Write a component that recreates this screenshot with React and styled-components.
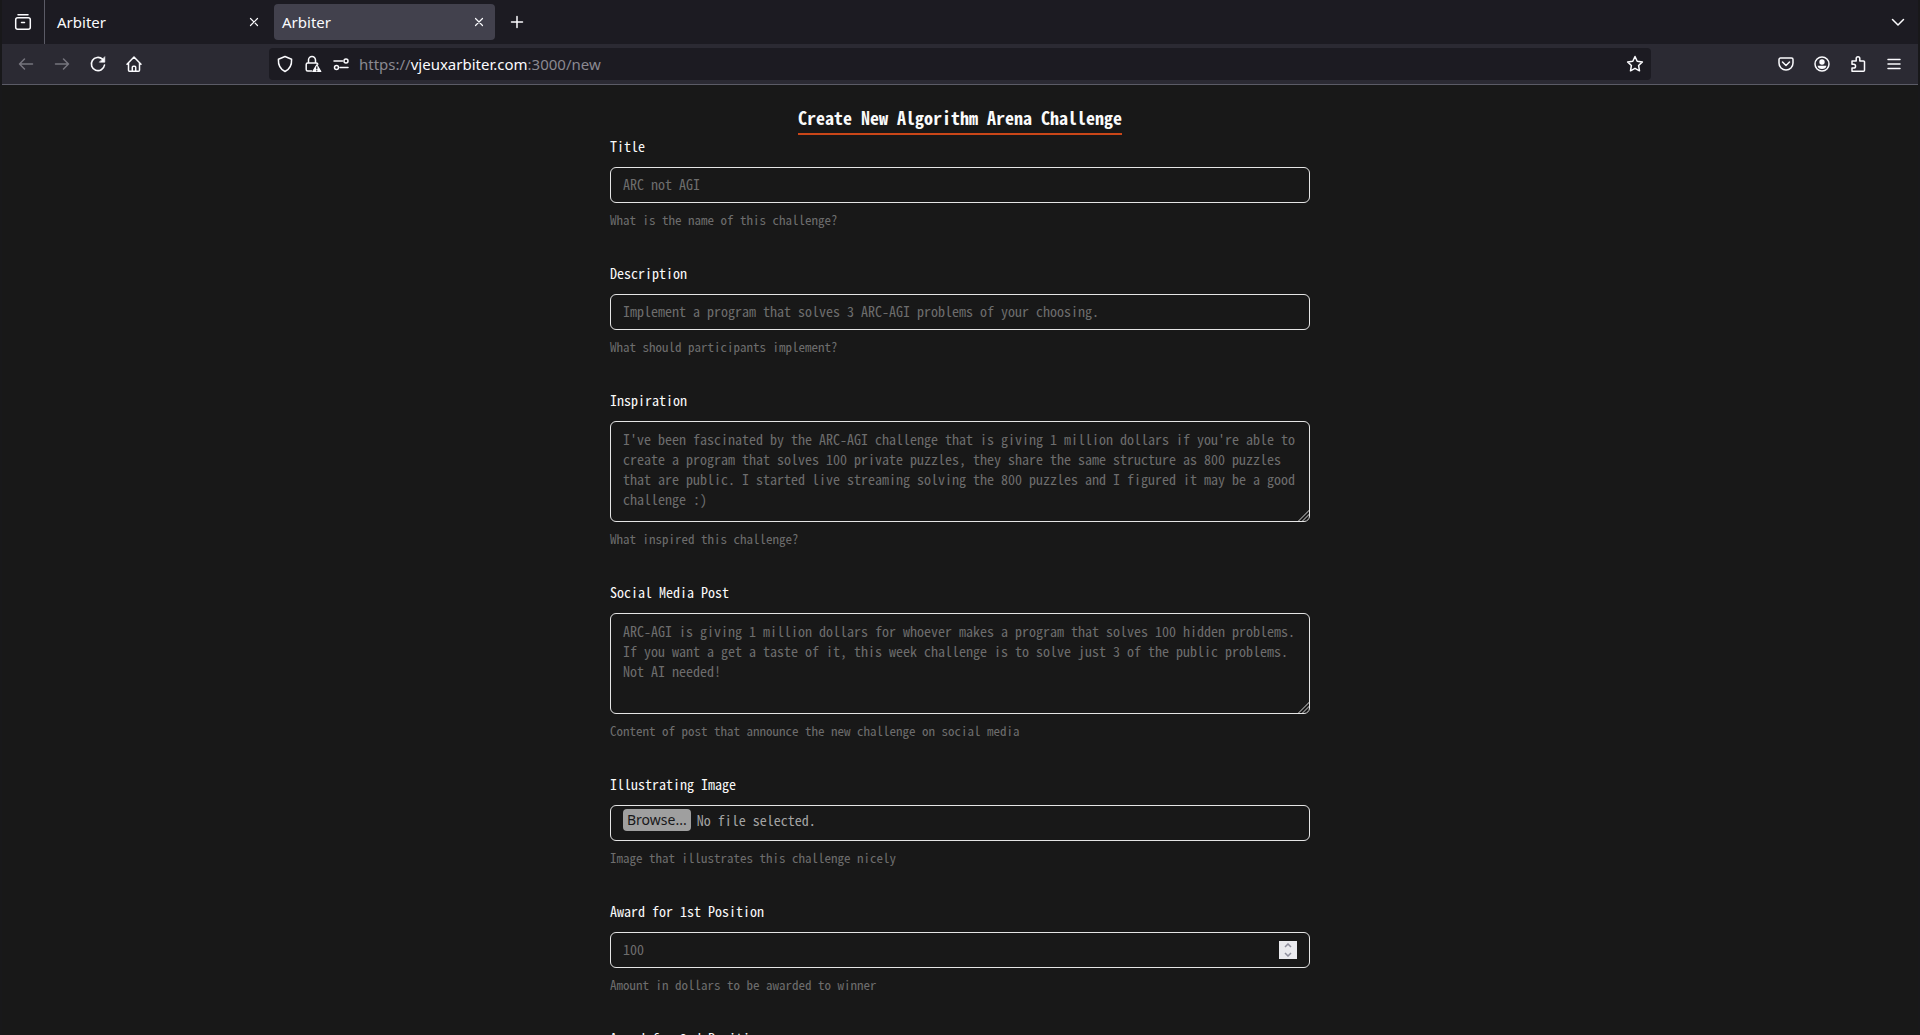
import React, { useRef, useState } from "react";
import styled, { createGlobalStyle } from "styled-components";

const mono = `"Noto Sans Mono CJK SC", "Noto Sans Mono CJK JP", "Liberation Mono", monospace`;
const sans = `"Noto Sans", "Open Sans", sans-serif`;

const GlobalStyle = createGlobalStyle`
  *, *::before, *::after { box-sizing: border-box; }
  html, body, #root { height: 100%; }
  body {
    margin: 0;
    background: #181818;
    color: #fafafa;
    font-family: ${mono};
    overflow: hidden;
  }
  button, input, textarea { font: inherit; color: inherit; }
`;

const Window = styled.div`
  display: flex;
  flex-direction: column;
  height: 100vh;
  border: solid #18181a;
  border-width: 0 2px;
`;

const TabStrip = styled.div`
  display: flex;
  align-items: center;
  flex: none;
  height: 44px;
  padding-right: 10px;
  background: #1c1b22;
  color: #fbfbfe;
  font-family: ${sans};
`;

const IconButton = styled.button`
  display: grid;
  place-items: center;
  flex: none;
  width: ${(p) => p.$width || 20}px;
  height: 32px;
  padding: 0;
  border: 0;
  background: none;
  color: ${(p) => (p.disabled ? "#76757e" : "#fbfbfe")};
`;

const ViewCell = styled.div`
  display: flex;
  align-items: center;
  height: 100%;
  padding: 0 11px;
  border-right: 1px solid #5b5b66;
`;

const Tab = styled.div`
  display: flex;
  align-items: center;
  justify-content: space-between;
  width: 221px;
  height: 36px;
  margin-left: 4px;
  padding: 0 3px 0 8px;
  border-radius: 4px;
  background: ${(p) => (p.$active ? "#42414d" : "transparent")};
  font-size: 15px;
  line-height: 20px;
`;

const Spacer = styled.div`
  flex: 1;
`;

const Toolbar = styled.div`
  display: flex;
  align-items: center;
  flex: none;
  height: 41px;
  padding: 0 14px;
  border-bottom: 1px solid #5b5b66;
  background: #2b2a33;
  font-family: ${sans};
`;

const NavGroup = styled.div`
  display: flex;
  gap: 16px;
  width: 253px;
`;

const ActionGroup = styled.div`
  display: flex;
  justify-content: flex-end;
  gap: 16px;
  width: 253px;
`;

const UrlBar = styled.div`
  display: flex;
  align-items: center;
  flex: 1;
  height: 32px;
  padding: 0 6px;
  border-radius: 4px;
  background: #1c1b22;
`;

const SiteIcons = styled.div`
  display: flex;
  gap: 8px;
`;

const Address = styled.div`
  flex: 1;
  margin-left: 8px;
  color: #8a8991;
  font-size: 15px;
  line-height: 20px;
  strong { color: #fbfbfe; font-weight: 400; }
`;

const Page = styled.main`
  flex: 1;
  min-height: 0;
  overflow: hidden;
  padding: 20px 24px;
`;

const Form = styled.form`
  display: flex;
  flex-direction: column;
  max-width: 700px;
  margin: 0 auto;
`;

const Heading = styled.h1`
  align-self: center;
  margin: 0;
  padding-bottom: 4px;
  border-bottom: 2px solid #ca4618;
  font-size: 18px;
  line-height: 24px;
  font-weight: 700;
`;

const FieldBlock = styled.div`
  display: flex;
  flex-direction: column;
  margin-bottom: 34px;
`;

const Label = styled.label`
  margin-bottom: 10px;
  font-size: 14px;
  line-height: 22px;
  font-weight: 500;
`;

const Hint = styled.p`
  margin: 8px 0 0;
  color: #6d6d6d;
  font-size: 13px;
  line-height: 17px;
`;

const TextInput = styled.input`
  height: 36px;
  padding: 0 12px 2px;
  border: 1px solid #e5e5e5;
  border-radius: 6px;
  background: transparent;
  font-size: 14px;
  line-height: 20px;
  &::placeholder { color: #6d6d6d; opacity: 1; }
`;

const TextArea = styled.textarea`
  height: 101px;
  padding: 7px 12px;
  border: 1px solid #e5e5e5;
  border-radius: 6px;
  background: transparent;
  font-size: 14px;
  line-height: 20px;
  resize: vertical;
  overflow: auto;
  &::placeholder { color: #6d6d6d; opacity: 1; }
  &::-webkit-resizer {
    background: repeating-linear-gradient(135deg, #666 0 1px, transparent 1px 3px) right bottom / 10px 10px no-repeat;
    clip-path: polygon(100% 33%, 100% 100%, 33% 100%);
    background: linear-gradient(135deg, transparent 50%, #777 50% 57%, transparent 57% 66%, #777 66% 73%, transparent 73% 82%, #777 82% 89%, transparent 89%) right bottom / 11px 11px no-repeat;
  }
`;

const BoxedControl = styled.div`
  display: flex;
  align-items: ${(p) => p.$align || "center"};
  height: 36px;
  padding: ${(p) => p.$pad || "0 12px"};
  border: 1px solid #e5e5e5;
  border-radius: 6px;
  font-size: 14px;
  line-height: 22px;
`;

const HiddenFile = styled.input`
  position: absolute;
  width: 1px;
  height: 1px;
  opacity: 0;
  pointer-events: none;
`;

const BrowseButton = styled.button`
  height: 22px;
  padding: 0 4px;
  border: 0;
  border-radius: 4px;
  background: #9f9f9f;
  color: #18181a;
  font-family: ${sans};
  font-size: 14px;
  line-height: 22px;
`;

const FileName = styled.output`
  margin-left: 6px;
  color: #a3a3a3;
`;

const NumberInput = styled.input`
  flex: 1;
  min-width: 0;
  padding: 0 0 2px;
  border: 0;
  background: transparent;
  appearance: textfield;
  &::-webkit-inner-spin-button { appearance: none; margin: 0; }
  &::placeholder { color: #6d6d6d; opacity: 1; }
`;

const Stepper = styled.div`
  display: flex;
  flex-direction: column;
  width: 18px;
  background: #e9e9ed;
`;

const StepButton = styled.button`
  display: grid;
  place-items: center;
  height: 9px;
  padding: 0;
  border: 0;
  background: none;
  color: #8f8f9d;
`;

const Svg = ({ children, w = 1.5 }) => (
  <svg width="20" height="20" viewBox="0 0 20 20" fill="none" stroke="currentColor"
    strokeWidth={w} strokeLinecap="round" strokeLinejoin="round" aria-hidden="true">
    {children}
  </svg>
);

const ViewIcon = () => (
  <Svg>
    <path d="M5 2.7h10" />
    <rect x="2.7" y="5.7" width="14.6" height="11.6" rx="2" />
    <path d="M8.5 10.5h3" />
  </Svg>
);
const CloseIcon = () => <Svg w={1.2}><path d="M6.5 6.5l7 7M13.5 6.5l-7 7" /></Svg>;
const PlusIcon = () => <Svg><path d="M10 4.5v11M4.5 10h11" /></Svg>;
const ChevronIcon = () => <Svg><path d="M4.5 7.5l5.5 5.5 5.5-5.5" /></Svg>;
const BackIcon = () => <Svg><path d="M16.5 10h-13M8.5 5l-5 5 5 5" /></Svg>;
const ForwardIcon = () => <Svg><path d="M3.5 10h13M11.500 5l5 5-5 5" /></Svg>;
const ReloadIcon = () => (
  <Svg w={1.6}>
    <path d="M16.5 11A6.600 6.600 0 1 1 14.500 5.200" />
    <path d="M16.800 3v5.200h-5.200z" fill="currentColor" strokeWidth="0.600" />
  </Svg>
);
const HomeIcon = () => (
  <Svg>
    <path d="M3 10.200l7-7.200 7 7.200M4.500 9v7.200a1 1 0 0 0 1 1h9a1 1 0 0 0 1-1V9" />
    <path d="M8.300 17v-3.800a1 1 0 0 1 1-1h1.400a1 1 0 0 1 1 1V17" />
  </Svg>
);
const ShieldIcon = () => (
  <Svg><path d="M10 2.500l6.600 2.700c.3 5.600-2 10-6.600 12.300C5.400 15.200 3.100 10.800 3.400 5.200z" /></Svg>
);
const LockIcon = () => (
  <Svg>
    <path d="M5.500 9V6a3.500 3.500 0 0 1 7 0v3M8.500 17H4.700a1.500 1.500 0 0 1-1.500-1.500v-5A1.500 1.500 0 0 1 4.700 9h8.600a1.500 1.500 0 0 1 1.500 1.200" />
    <path d="M13.800 10.800l4 6.700h-8z" fill="currentColor" strokeWidth="1.200" />
    <path d="M13.800 12.800v2M13.800 16.700v.1" stroke="#1c1b22" strokeWidth="1.300" />
  </Svg>
);
const PermissionsIcon = () => (
  <Svg>
    <path d="M3 7h8.500M9 13.500h8" />
    <circle cx="15" cy="7" r="2" />
    <circle cx="5.500" cy="13.500" r="2" />
  </Svg>
);
const StarIcon = () => (
  <Svg><path d="M10 2.500l2.200 4.700 5.200.7-3.800 3.600.9 5.300L10 14.300l-4.500 2.500.9-5.300-3.800-3.600 5.200-.7z" /></Svg>
);
const PocketIcon = () => (
  <Svg>
    <path d="M4.500 4h11a1.500 1.500 0 0 1 1.500 1.500V9a7 7 0 0 1-14 0V5.500A1.500 1.500 0 0 1 4.500 4z" />
    <path d="M6.500 8l3.500 3.500L13.500 8" />
  </Svg>
);
const AccountIcon = () => (
  <Svg>
    <circle cx="10" cy="10" r="7" />
    <circle cx="10" cy="8" r="2.700" fill="currentColor" stroke="none" />
    <path d="M5.600 11.700h8.800c0 2-2 3.300-4.400 3.300s-4.400-1.300-4.400-3.300z" fill="currentColor" stroke="none" />
  </Svg>
);
const ExtensionIcon = () => (
  <Svg><path d="M4 17.200V14h1.700a1.800 1.800 0 0 0 0-3.700H4V7h4.200V4.500a1.800 1.800 0 0 1 3.600 0V7h3.700a1 1 0 0 1 1 1v8.200a1 1 0 0 1-1 1z" /></Svg>
);
const MenuIcon = () => <Svg><path d="M4 5.500h12M4 10h12M4 14.500h12" /></Svg>;
const StepArrow = ({ d }) => (
  <svg width="8" height="5" viewBox="0 0 8 5" fill="none" stroke="currentColor" strokeWidth="1.500" aria-hidden="true">
    <path d={d} />
  </svg>
);

const Field = ({ id, label, hint, children }) => (
  <FieldBlock>
    <Label htmlFor={id}>{label}</Label>
    {children}
    {hint && <Hint>{hint}</Hint>}
  </FieldBlock>
);

function FileField({ id }) {
  const ref = useRef(null);
  const [name, setName] = useState("No file selected.");
  return (
    <BoxedControl $align="flex-start" $pad="3px 12px">
      <HiddenFile ref={ref} id={id} type="file" accept="image/*" tabIndex={-1}
        onChange={(e) => setName(e.target.files[0]?.name || "No file selected.")} />
      <BrowseButton type="button" onClick={() => ref.current.click()}>Browse...</BrowseButton>
      <FileName htmlFor={id}>{name}</FileName>
    </BoxedControl>
  );
}

function AwardField({ id, placeholder }) {
  const ref = useRef(null);
  return (
    <BoxedControl>
      <NumberInput ref={ref} id={id} type="number" placeholder={placeholder} />
      <Stepper>
        <StepButton type="button" aria-label="Increase" onClick={() => ref.current.stepUp()}>
          <StepArrow d="M1 4l3-3 3 3" />
        </StepButton>
        <StepButton type="button" aria-label="Decrease" onClick={() => ref.current.stepDown()}>
          <StepArrow d="M1 1l3 3 3-3" />
        </StepButton>
      </Stepper>
    </BoxedControl>
  );
}

export default function App() {
  return (
    <Window>
      <GlobalStyle />
      <TabStrip>
        <ViewCell><IconButton aria-label="Recent browsing"><ViewIcon /></IconButton></ViewCell>
        <Tab>Arbiter<IconButton aria-label="Close tab" $width={26}><CloseIcon /></IconButton></Tab>
        <Tab $active>Arbiter<IconButton aria-label="Close tab" $width={26}><CloseIcon /></IconButton></Tab>
        <IconButton aria-label="New tab" $width={44}><PlusIcon /></IconButton>
        <Spacer />
        <IconButton aria-label="List all tabs"><ChevronIcon /></IconButton>
      </TabStrip>
      <Toolbar>
        <NavGroup>
          <IconButton aria-label="Back" disabled><BackIcon /></IconButton>
          <IconButton aria-label="Forward" disabled><ForwardIcon /></IconButton>
          <IconButton aria-label="Reload"><ReloadIcon /></IconButton>
          <IconButton aria-label="Home"><HomeIcon /></IconButton>
        </NavGroup>
        <UrlBar>
          <SiteIcons>
            <IconButton aria-label="Tracking protection"><ShieldIcon /></IconButton>
            <IconButton aria-label="Connection security"><LockIcon /></IconButton>
            <IconButton aria-label="Permissions"><PermissionsIcon /></IconButton>
          </SiteIcons>
          <Address>https://<strong>vjeuxarbiter.com</strong>:3000/new</Address>
          <IconButton aria-label="Bookmark"><StarIcon /></IconButton>
        </UrlBar>
        <ActionGroup>
          <IconButton aria-label="Save to Pocket"><PocketIcon /></IconButton>
          <IconButton aria-label="Account"><AccountIcon /></IconButton>
          <IconButton aria-label="Extensions"><ExtensionIcon /></IconButton>
          <IconButton aria-label="Menu"><MenuIcon /></IconButton>
        </ActionGroup>
      </Toolbar>
      <Page>
        <Form>
          <Heading>Create New Algorithm Arena Challenge</Heading>
          <Field id="title" label="Title" hint="What is the name of this challenge?">
            <TextInput id="title" placeholder="ARC not AGI" />
          </Field>
          <Field id="description" label="Description" hint="What should participants implement?">
            <TextInput id="description" placeholder="Implement a program that solves 3 ARC-AGI problems of your choosing." />
          </Field>
          <Field id="inspiration" label="Inspiration" hint="What inspired this challenge?">
            <TextArea id="inspiration" placeholder="I've been fascinated by the ARC-AGI challenge that is giving 1 million dollars if you're able to create a program that solves 100 private puzzles, they share the same structure as 800 puzzles that are public. I started live streaming solving the 800 puzzles and I figured it may be a good challenge :)" />
          </Field>
          <Field id="post" label="Social Media Post" hint="Content of post that announce the new challenge on social media">
            <TextArea id="post" placeholder="ARC-AGI is giving 1 million dollars for whoever makes a program that solves 100 hidden problems. If you want a get a taste of it, this week challenge is to solve just 3 of the public problems. Not AI needed!" />
          </Field>
          <Field id="image" label="Illustrating Image" hint="Image that illustrates this challenge nicely">
            <FileField id="image" />
          </Field>
          <Field id="award1" label="Award for 1st Position" hint="Amount in dollars to be awarded to winner">
            <AwardField id="award1" placeholder="100" />
          </Field>
          <Field id="award2" label="Award for 2nd Position">
            <AwardField id="award2" />
          </Field>
        </Form>
      </Page>
    </Window>
  );
}
